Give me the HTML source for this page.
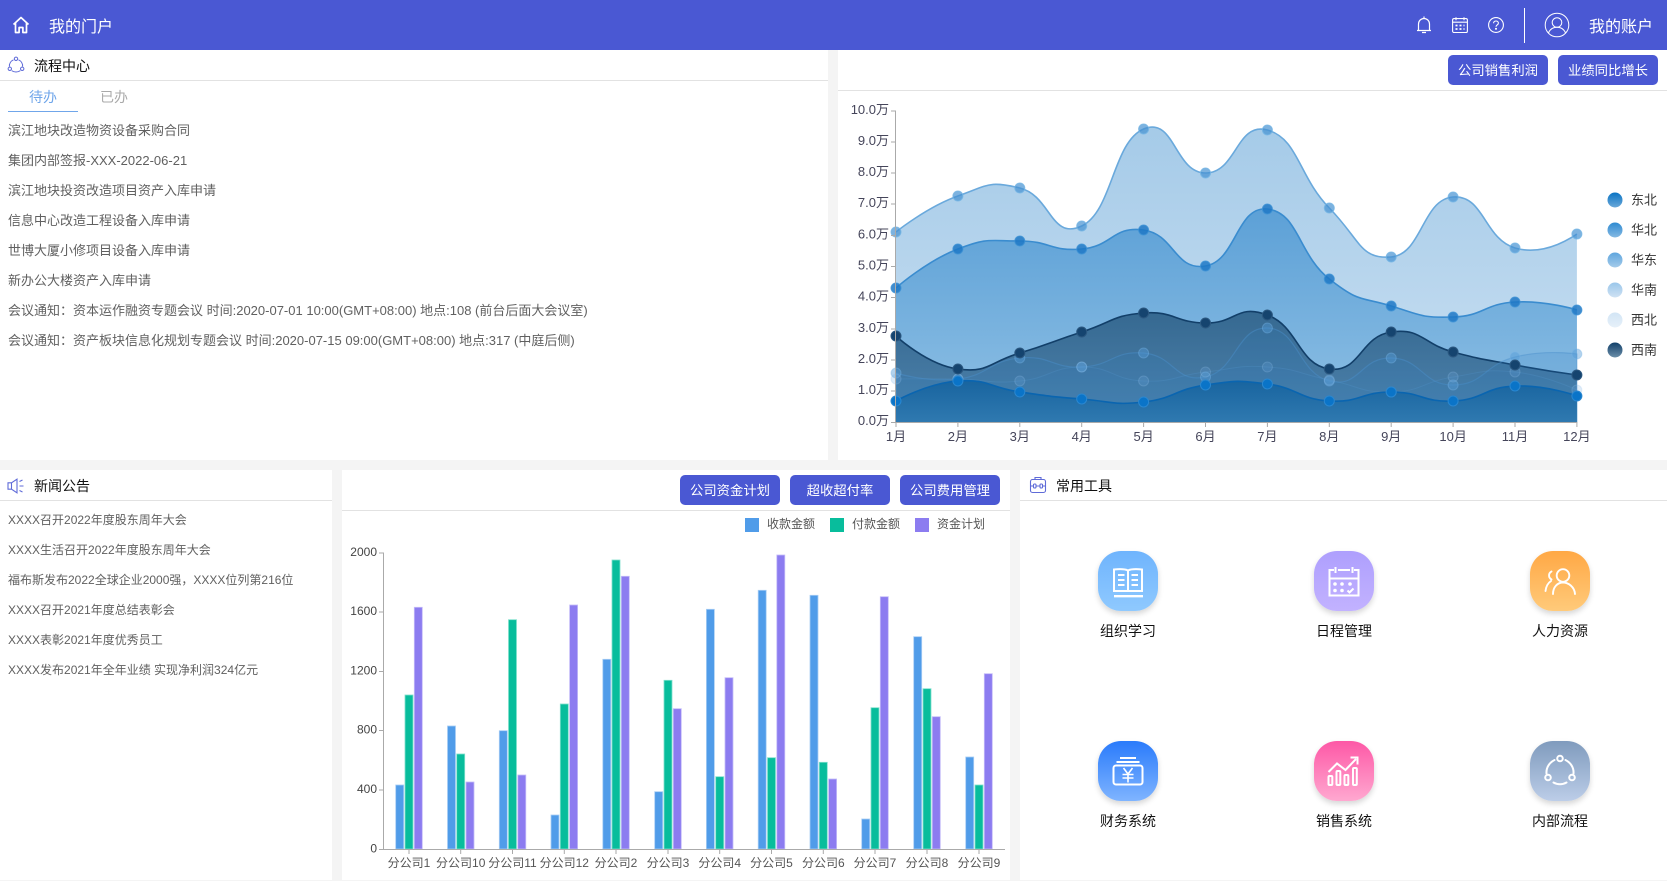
<!DOCTYPE html>
<html lang="zh">
<head>
<meta charset="utf-8">
<title>我的门户</title>
<style>
html,body{margin:0;padding:0;width:1667px;height:881px;overflow:hidden;background:#f4f4f4;font-family:"Liberation Sans","Noto Sans CJK SC",sans-serif;}
.a{position:absolute;white-space:nowrap;}
.p{position:absolute;background:#fff;}
.ln{position:absolute;height:1px;background:#e2e2e2;}
.t{position:absolute;white-space:nowrap;font-size:14px;line-height:20px;color:#111;}
.li{position:absolute;white-space:nowrap;left:8px;line-height:20px;color:#606060;}
.l13{font-size:13px}.l12{font-size:12px}
.b{position:absolute;width:100px;height:30px;line-height:32px;text-align:center;background:#4a58d3;color:#fff;font-size:13.33px;border-radius:5px;}
.ic{position:absolute;width:60px;height:60px;border-radius:23px;box-shadow:0 3px 6px rgba(0,0,0,.16);}
.ic svg{position:absolute;left:0;top:0;}
.lb{position:absolute;width:120px;text-align:center;font-size:14px;line-height:20px;color:#111;}
svg text{font-family:"Liberation Sans","Noto Sans CJK SC",sans-serif;}
</style>
</head>
<body>
<!-- top bar -->
<div class="p" style="left:0;top:0;width:1667px;height:50px;background:#4a58d3"></div>
<svg class="a" style="left:12px;top:16px" width="18" height="19" viewBox="0 0 18 19" fill="none" stroke="#fff" stroke-width="1.7" stroke-linejoin="round"><path d="M1.5 8.5 9 1.5l7.5 7M3.5 7v9.5h3.6v-5h3.800v5h3.600V7"/></svg>
<div class="a" style="left:49px;top:17px;font-size:16px;line-height:22px;color:#fff">我的门户</div>
<svg class="a" style="left:1415px;top:15px" width="18" height="20" viewBox="0 0 18 20" fill="none" stroke="#fff" stroke-width="1.2"><path d="M2 15.5h14M3.5 15.5V9a5.5 5.5 0 0 1 11 0v6.5M9 1.5v2M7 17.5h4" /></svg>
<svg class="a" style="left:1452px;top:17px" width="16" height="16" viewBox="0 0 16 16" fill="none" stroke="#fff" stroke-width="1.1"><rect x=".6" y="1.6" width="14.8" height="14" rx="1.5"/><path d="M.6 5.2h14.8M4 .3v3M12 .3v3"/><path stroke-width="1.8" stroke-dasharray="2 2" d="M3.5 8.5h9M3.5 12h9"/></svg>
<svg class="a" style="left:1488px;top:17px" width="16" height="16" viewBox="0 0 16 16" fill="none" stroke="#fff" stroke-width="1.1"><circle cx="8" cy="8" r="7.4"/><path d="M5.6 6.2C5.6 4.800 6.700 4 8 4c1.400 0 2.400.9 2.400 2.100 0 1.800-2.400 1.900-2.400 3.700"/><circle cx="8" cy="11.800" r=".5" fill="#fff"/></svg>
<div class="a" style="left:1524px;top:8px;width:1px;height:35px;background:#fff"></div>
<svg class="a" style="left:1544px;top:12px" width="26" height="26" viewBox="0 0 26 26" fill="none" stroke="#fff" stroke-width="1"><circle cx="13" cy="13" r="11.800"/><circle cx="13" cy="10.500" r="4.800"/><path d="M4.500 21c1.500-3.800 4.500-5.700 8.500-5.700s7 1.900 8.500 5.700"/></svg>
<div class="a" style="left:1589px;top:17px;font-size:16px;line-height:22px;color:#fff">我的账户</div>

<!-- flow panel -->
<div class="p" style="left:0;top:50px;width:828px;height:410px"></div>
<svg class="a" style="left:7px;top:56px" width="18" height="18" viewBox="0 0 18 18" fill="none" stroke="#5f6bd8" stroke-width="1"><circle cx="9" cy="2.800" r="1.700"/><circle cx="2.800" cy="12.800" r="1.700"/><circle cx="15.200" cy="12.800" r="1.700"/><path d="M6.500 3.800C3.800 5 2.200 7.500 2.400 10.600M11.500 3.800c2.700 1.200 4.300 3.700 4.100 6.800M4.700 14.600c2.500 1.900 6.100 1.900 8.600 0"/></svg>
<div class="t" style="left:34px;top:56px">流程中心</div>
<div class="ln" style="left:0;top:80px;width:828px"></div>
<div class="a" style="left:29px;top:87px;font-size:14px;line-height:20px;color:#70a6ea">待办</div>
<div class="a" style="left:100px;top:87px;font-size:14px;line-height:20px;color:#aaa">已办</div>
<div class="a" style="left:8px;top:111px;width:70px;height:1px;background:#70a6ea"></div>
<div class="li l13" style="top:121px">滨江地块改造物资设备采购合同</div>
<div class="li l13" style="top:151px">集团内部签报-XXX-2022-06-21</div>
<div class="li l13" style="top:181px">滨江地块投资改造项目资产入库申请</div>
<div class="li l13" style="top:211px">信息中心改造工程设备入库申请</div>
<div class="li l13" style="top:241px">世博大厦小修项目设备入库申请</div>
<div class="li l13" style="top:271px">新办公大楼资产入库申请</div>
<div class="li l13" style="top:301px">会议通知：资本运作融资专题会议 时间:2020-07-01 10:00(GMT+08:00) 地点:108 (前台后面大会议室)</div>
<div class="li l13" style="top:331px">会议通知：资产板块信息化规划专题会议 时间:2020-07-15 09:00(GMT+08:00) 地点:317 (中庭后侧)</div>

<!-- area chart panel -->
<div class="p" style="left:838px;top:50px;width:829px;height:410px"></div>
<div class="ln" style="left:838px;top:90px;width:829px"></div>
<div class="b" style="left:1448px;top:55px">公司销售利润</div>
<div class="b" style="left:1558px;top:55px">业绩同比增长</div>
<svg class="a" style="left:0;top:0" width="1667" height="460" viewBox="0 0 1667 460">
<defs>
<linearGradient id="g1" gradientUnits="userSpaceOnUse" x1="0" y1="120" x2="0" y2="340"><stop offset="0" stop-color="#a4cae8"/><stop offset="1" stop-color="#c0daef"/></linearGradient>
<linearGradient id="g2" gradientUnits="userSpaceOnUse" x1="0" y1="200" x2="0" y2="400"><stop offset="0" stop-color="#5a9fd6"/><stop offset="1" stop-color="#8abde3"/></linearGradient>
<linearGradient id="g3" gradientUnits="userSpaceOnUse" x1="0" y1="310" x2="0" y2="422"><stop offset="0" stop-color="#356890"/><stop offset="1" stop-color="#4f84ae"/></linearGradient>
<linearGradient id="g4" gradientUnits="userSpaceOnUse" x1="0" y1="380" x2="0" y2="422"><stop offset="0" stop-color="#18649f"/><stop offset="1" stop-color="#2f79b0"/></linearGradient>
<linearGradient id="s1" x1="0" y1="0" x2="0" y2="1"><stop offset="0" stop-color="#0a74c4"/><stop offset="1" stop-color="#6aa8d8"/></linearGradient>
<linearGradient id="s2" x1="0" y1="0" x2="0" y2="1"><stop offset="0" stop-color="#2f8bd2"/><stop offset="1" stop-color="#85b9e2"/></linearGradient>
<linearGradient id="s3" x1="0" y1="0" x2="0" y2="1"><stop offset="0" stop-color="#5fa6de"/><stop offset="1" stop-color="#a4cbea"/></linearGradient>
<linearGradient id="s4" x1="0" y1="0" x2="0" y2="1"><stop offset="0" stop-color="#9ac6ea"/><stop offset="1" stop-color="#cfe2f3"/></linearGradient>
<linearGradient id="s5" x1="0" y1="0" x2="0" y2="1"><stop offset="0" stop-color="#d2e5f5"/><stop offset="1" stop-color="#e6f0f9"/></linearGradient>
<linearGradient id="s6" x1="0" y1="0" x2="0" y2="1"><stop offset="0" stop-color="#12406a"/><stop offset="1" stop-color="#6b8ea8"/></linearGradient>
</defs>
<!-- top series -->
<path fill="url(#g1)" d="M896,232 C896,232 926.9,207 957.9,196 S988.8,180.5 1019.8,188 S1050.7,240.75 1081.7,226 S1112.6,142.25 1143.6,129 S1174.5,172.75 1205.5,173 S1236.4,121.25 1267.4,130 S1298.3,176.25 1329.3,208 S1360.2,259.75 1391.2,257 S1422.1,199.25 1453.1,197 S1484,238.75 1515,248 S1576.9,234 1576.9,234 L1576.9,422 L896,422 Z"/>
<path fill="none" stroke="#6aa9dc" stroke-width="1.6" d="M896,232 C896,232 926.9,207 957.9,196 S988.8,180.5 1019.8,188 S1050.7,240.75 1081.7,226 S1112.6,142.25 1143.6,129 S1174.5,172.75 1205.5,173 S1236.4,121.25 1267.4,130 S1298.3,176.25 1329.3,208 S1360.2,259.75 1391.2,257 S1422.1,199.25 1453.1,197 S1484,238.75 1515,248 S1576.9,234 1576.9,234"/>
<!-- second series -->
<path fill="url(#g2)" d="M896,288 C896,288 926.9,260.75 957.9,249 S988.8,241 1019.8,241 S1050.7,251.75 1081.7,249 S1112.6,225.75 1143.6,230 S1174.5,271.25 1205.5,266 S1236.4,205.75 1267.4,209 S1298.3,254.75 1329.3,279 S1360.2,296.5 1391.2,306 S1422.1,318 1453.1,317 S1484,303.75 1515,302 S1576.9,310 1576.9,310 L1576.9,422 L896,422 Z"/>
<path fill="none" stroke="#3a8ccf" stroke-width="1.6" d="M896,288 C896,288 926.9,260.75 957.9,249 S988.8,241 1019.8,241 S1050.7,251.75 1081.7,249 S1112.6,225.75 1143.6,230 S1174.5,271.25 1205.5,266 S1236.4,205.75 1267.4,209 S1298.3,254.75 1329.3,279 S1360.2,296.5 1391.2,306 S1422.1,318 1453.1,317 S1484,303.75 1515,302 S1576.9,310 1576.9,310"/>
<!-- dark series -->
<path fill="url(#g3)" d="M896,336 C896,336 926.9,364.75 957.9,369 S988.8,362.25 1019.8,353 S1050.7,342 1081.7,332 S1112.6,315.25 1143.6,313 S1174.5,322.5 1205.5,323 S1236.4,303.5 1267.4,315 S1298.3,364.75 1329.3,369 S1360.2,336.25 1391.2,332 S1422.1,343.75 1453.1,352 S1484,359.25 1515,365 S1576.9,375 1576.9,375 L1576.9,422 L896,422 Z"/>
<path fill="none" stroke="#123f69" stroke-width="1.6" d="M896,336 C896,336 926.9,364.75 957.9,369 S988.8,362.25 1019.8,353 S1050.7,342 1081.7,332 S1112.6,315.25 1143.6,313 S1174.5,322.5 1205.5,323 S1236.4,303.5 1267.4,315 S1298.3,364.75 1329.3,369 S1360.2,336.25 1391.2,332 S1422.1,343.75 1453.1,352 S1484,359.25 1515,365 S1576.9,375 1576.9,375"/>
<!-- translucent series -->
<path fill="rgba(45,125,190,.16)" stroke="rgba(75,145,205,.45)" stroke-width="1.2" d="M896,373 C896,373 926.9,382.75 957.9,379 S988.8,361 1019.8,358 S1050.7,368.25 1081.7,367 S1112.6,350.5 1143.6,353 S1174.5,383.25 1205.5,377 S1236.4,327 1267.4,328 S1298.3,373.5 1329.3,381 S1360.2,357 1391.2,358 S1422.1,385.25 1453.1,385 S1484,364.75 1515,357 S1576.9,354 1576.9,354 L1576.9,422 L896,422 Z"/>
<path fill="rgba(50,125,190,.1)" stroke="rgba(85,150,205,.28)" stroke-width="1" d="M896,379 C896,379 926.9,378.5 957.9,379 S988.8,384 1019.8,381 S1050.7,367 1081.7,367 S1112.6,379.75 1143.6,381 S1174.5,375.5 1205.5,372 S1236.4,365 1267.4,367 S1298.3,373.75 1329.3,380 S1360.2,392.75 1391.2,392 S1422.1,382 1453.1,377 S1484,368.75 1515,372 S1576.9,390 1576.9,390 L1576.9,422 L896,422 Z"/>
<!-- bottom series -->
<path fill="url(#g4)" d="M896,401 C896,401 926.9,383.25 957.9,381 S988.8,387.5 1019.8,392 S1050.7,396.5 1081.7,399 S1112.6,405.5 1143.6,402 S1174.5,389.5 1205.5,385 S1236.4,380 1267.4,384 S1298.3,399 1329.3,401 S1360.2,392 1391.2,392 S1422.1,402.5 1453.1,401 S1484,387.25 1515,386 S1576.9,396 1576.9,396 L1576.9,422 L896,422 Z"/>
<path fill="none" stroke="#0a65b0" stroke-width="1.6" d="M896,401 C896,401 926.9,383.25 957.9,381 S988.8,387.5 1019.8,392 S1050.7,396.5 1081.7,399 S1112.6,405.5 1143.6,402 S1174.5,389.5 1205.5,385 S1236.4,380 1267.4,384 S1298.3,399 1329.3,401 S1360.2,392 1391.2,392 S1422.1,402.5 1453.1,401 S1484,387.25 1515,386 S1576.9,396 1576.9,396"/>
<!-- dots -->
<g fill="rgba(70,145,210,.7)" stroke="rgba(115,180,228,.8)" stroke-width="1">
<circle cx="896" cy="232" r="5"/><circle cx="957.9" cy="196" r="5"/><circle cx="1019.8" cy="188" r="5"/><circle cx="1081.7" cy="226" r="5"/><circle cx="1143.6" cy="129" r="5"/><circle cx="1205.500" cy="173" r="5"/><circle cx="1267.400" cy="130" r="5"/><circle cx="1329.300" cy="208" r="5"/><circle cx="1391.200" cy="257" r="5"/><circle cx="1453.100" cy="197" r="5"/><circle cx="1515" cy="248" r="5"/><circle cx="1576.900" cy="234" r="5"/></g>
<g fill="rgba(30,120,198,.85)" stroke="rgba(60,145,212,.8)" stroke-width="1">
<circle cx="896" cy="288" r="5"/><circle cx="957.9" cy="249" r="5"/><circle cx="1019.8" cy="241" r="5"/><circle cx="1081.7" cy="249" r="5"/><circle cx="1143.6" cy="230" r="5"/><circle cx="1205.500" cy="266" r="5"/><circle cx="1267.400" cy="209" r="5"/><circle cx="1329.300" cy="279" r="5"/><circle cx="1391.200" cy="306" r="5"/><circle cx="1453.100" cy="317" r="5"/><circle cx="1515" cy="302" r="5"/><circle cx="1576.900" cy="310" r="5"/></g>
<g fill="rgba(85,155,215,.45)" stroke="rgba(120,180,230,.4)" stroke-width="1">
<circle cx="896" cy="373" r="5"/><circle cx="957.9" cy="379" r="5"/><circle cx="1019.8" cy="358" r="5"/><circle cx="1081.7" cy="367" r="5"/><circle cx="1143.6" cy="353" r="5"/><circle cx="1205.500" cy="377" r="5"/><circle cx="1267.400" cy="328" r="5"/><circle cx="1329.300" cy="381" r="5"/><circle cx="1391.200" cy="358" r="5"/><circle cx="1453.100" cy="385" r="5"/><circle cx="1515" cy="357" r="5"/><circle cx="1576.900" cy="354" r="5"/></g>
<g fill="rgba(110,170,222,.22)" stroke="rgba(150,195,235,.25)" stroke-width="1">
<circle cx="896" cy="379" r="5"/><circle cx="957.9" cy="379" r="5"/><circle cx="1019.8" cy="381" r="5"/><circle cx="1081.7" cy="367" r="5"/><circle cx="1143.6" cy="381" r="5"/><circle cx="1205.500" cy="372" r="5"/><circle cx="1267.400" cy="367" r="5"/><circle cx="1329.300" cy="380" r="5"/><circle cx="1391.200" cy="392" r="5"/><circle cx="1453.100" cy="377" r="5"/><circle cx="1515" cy="372" r="5"/><circle cx="1576.900" cy="390" r="5"/></g>
<g fill="#15446f" stroke="#2c5880" stroke-width="1">
<circle cx="896" cy="336" r="5"/><circle cx="957.9" cy="369" r="5"/><circle cx="1019.8" cy="353" r="5"/><circle cx="1081.7" cy="332" r="5"/><circle cx="1143.6" cy="313" r="5"/><circle cx="1205.500" cy="323" r="5"/><circle cx="1267.400" cy="315" r="5"/><circle cx="1329.300" cy="369" r="5"/><circle cx="1391.200" cy="332" r="5"/><circle cx="1453.100" cy="352" r="5"/><circle cx="1515" cy="365" r="5"/><circle cx="1576.900" cy="375" r="5"/></g>
<g fill="#0a74c8" stroke="#2a87d0" stroke-width="1">
<circle cx="896" cy="401" r="5"/><circle cx="957.9" cy="381" r="5"/><circle cx="1019.8" cy="392" r="5"/><circle cx="1081.7" cy="399" r="5"/><circle cx="1143.6" cy="402" r="5"/><circle cx="1205.500" cy="385" r="5"/><circle cx="1267.400" cy="384" r="5"/><circle cx="1329.300" cy="401" r="5"/><circle cx="1391.200" cy="392" r="5"/><circle cx="1453.100" cy="401" r="5"/><circle cx="1515" cy="386" r="5"/><circle cx="1576.900" cy="396" r="5"/></g>
<!-- axes -->
<path fill="none" stroke="#aaa" stroke-width="1" d="M895.500 111V422.500H1577M891 111h5M891 142h5M891 173h5M891 204h5M891 235.500h5M891 266.500h5M891 297.500h5M891 329h5M891 360h5M891 391h5M891 422.500h5M896 422v5M957.900 422v5M1019.800 422v5M1081.700 422v5M1143.600 422v5M1205.500 422v5M1267.400 422v5M1329.300 422v5M1391.200 422v5M1453.100 422v5M1515 422v5M1576.900 422v5"/>
<g font-size="13" fill="#45455a" text-anchor="end">
<text x="889" y="114">10.0万</text><text x="889" y="145">9.0万</text><text x="889" y="176">8.0万</text><text x="889" y="207">7.0万</text><text x="889" y="238.500">6.0万</text><text x="889" y="269.500">5.0万</text><text x="889" y="300.500">4.0万</text><text x="889" y="332">3.0万</text><text x="889" y="363">2.0万</text><text x="889" y="394">1.0万</text><text x="889" y="425">0.0万</text>
</g>
<g font-size="13" fill="#45455a" text-anchor="middle">
<text x="896" y="441">1月</text><text x="957.900" y="441">2月</text><text x="1019.800" y="441">3月</text><text x="1081.700" y="441">4月</text><text x="1143.600" y="441">5月</text><text x="1205.500" y="441">6月</text><text x="1267.400" y="441">7月</text><text x="1329.300" y="441">8月</text><text x="1391.200" y="441">9月</text><text x="1453.100" y="441">10月</text><text x="1515" y="441">11月</text><text x="1576.900" y="441">12月</text>
</g>
<!-- legend -->
<circle cx="1615" cy="200" r="7.500" fill="url(#s1)"/><circle cx="1615" cy="230" r="7.500" fill="url(#s2)"/><circle cx="1615" cy="260" r="7.500" fill="url(#s3)"/><circle cx="1615" cy="290" r="7.500" fill="url(#s4)"/><circle cx="1615" cy="320" r="7.500" fill="url(#s5)"/><circle cx="1615" cy="350" r="7.500" fill="url(#s6)"/>
<g font-size="13" fill="#333">
<text x="1631" y="204.500">东北</text><text x="1631" y="234.500">华北</text><text x="1631" y="264.500">华东</text><text x="1631" y="294.500">华南</text><text x="1631" y="324.500">西北</text><text x="1631" y="354.500">西南</text>
</g>
</svg>

<!-- news panel -->
<div class="p" style="left:0;top:470px;width:332px;height:410px"></div>
<svg class="a" style="left:7px;top:477px" width="18" height="18" viewBox="0 0 18 18" fill="none" stroke="#5f6bd8" stroke-width="1.1"><path d="M1 5.800h3.500L10 2.200v13.600L4.500 12.200H1zM4.500 5.800v6.400"/><path d="M12.500 4.500l3-1.500M12.500 9h4M12.500 13.500l3 1.500"/></svg>
<div class="t" style="left:34px;top:476px">新闻公告</div>
<div class="ln" style="left:0;top:500px;width:332px"></div>
<div class="li l12" style="top:510px">XXXX召开2022年度股东周年大会</div>
<div class="li l12" style="top:540px">XXXX生活召开2022年度股东周年大会</div>
<div class="li l12" style="top:570px">福布斯发布2022全球企业2000强，XXXX位列第216位</div>
<div class="li l12" style="top:600px">XXXX召开2021年度总结表彰会</div>
<div class="li l12" style="top:630px">XXXX表彰2021年度优秀员工</div>
<div class="li l12" style="top:660px">XXXX发布2021年全年业绩 实现净利润324亿元</div>

<!-- bar chart panel -->
<div class="p" style="left:342px;top:470px;width:668px;height:410px"></div>
<div class="ln" style="left:342px;top:510px;width:668px"></div>
<div class="b" style="left:680px;top:475px">公司资金计划</div>
<div class="b" style="left:790px;top:475px">超收超付率</div>
<div class="b" style="left:900px;top:475px">公司费用管理</div>
<svg class="a" style="left:0;top:470px" width="1020" height="411" viewBox="0 470 1020 411">
<rect x="745" y="518" width="14" height="14" fill="#509ce9"/><rect x="830" y="518" width="14" height="14" fill="#08bd9c"/><rect x="915" y="518" width="14" height="14" fill="#8c7cf0"/>
<g font-size="12" fill="#555"><text x="767" y="528">收款金额</text><text x="852" y="528">付款金额</text><text x="937" y="528">资金计划</text></g>
<g fill="#509ce9" stroke="#a8cef4" stroke-width=".8">
<rect x="395.700" y="785" width="8" height="64"/><rect x="447.500" y="726" width="8" height="123"/><rect x="499.300" y="730.700" width="8" height="118.300"/><rect x="551" y="815" width="8" height="34"/><rect x="602.800" y="659.300" width="8" height="189.700"/><rect x="654.700" y="791.700" width="8" height="57.300"/><rect x="706.400" y="609.300" width="8" height="239.700"/><rect x="758.200" y="590.300" width="8" height="258.700"/><rect x="810" y="595.300" width="8" height="253.700"/><rect x="861.700" y="819" width="8" height="30"/><rect x="913.700" y="636.700" width="8" height="212.300"/><rect x="965.700" y="757" width="8" height="92"/>
</g>
<g fill="#08bd9c" stroke="#80e0cd" stroke-width=".8">
<rect x="405" y="695" width="8" height="154"/><rect x="456.700" y="754" width="8" height="95"/><rect x="508.500" y="619.700" width="8" height="229.300"/><rect x="560.300" y="704" width="8" height="145"/><rect x="612" y="560" width="8" height="289"/><rect x="664" y="680.300" width="8" height="168.700"/><rect x="715.700" y="776.700" width="8" height="72.300"/><rect x="767.500" y="757.700" width="8" height="91.300"/><rect x="819.300" y="762.300" width="8" height="86.700"/><rect x="871" y="707.700" width="8" height="141.300"/><rect x="923" y="688.700" width="8" height="160.300"/><rect x="975" y="785" width="8" height="64"/>
</g>
<g fill="#8c7cf0" stroke="#c4bcf8" stroke-width=".8">
<rect x="414.300" y="607.300" width="8" height="241.700"/><rect x="466" y="782" width="8" height="67"/><rect x="517.800" y="775" width="8" height="74"/><rect x="569.600" y="605" width="8" height="244"/><rect x="621.300" y="576.300" width="8" height="272.700"/><rect x="673.300" y="708.700" width="8" height="140.300"/><rect x="725" y="677.700" width="8" height="171.300"/><rect x="776.800" y="555" width="8" height="294"/><rect x="828.600" y="779" width="8" height="70"/><rect x="880.300" y="596.700" width="8" height="252.300"/><rect x="932.300" y="716.700" width="8" height="132.300"/><rect x="984.300" y="673.700" width="8" height="175.300"/>
</g>
<path fill="none" stroke="#aaa" stroke-width="1" d="M383.500 553V849.500H1005M379 553h5M379 612h5M379 671.500h5M379 730.500h5M379 790h5M379 849.500h5M409 849v5M460.700 849v5M512.500 849v5M564.300 849v5M616 849v5M668 849v5M719.700 849v5M771.500 849v5M823.300 849v5M875 849v5M927 849v5M979 849v5"/>
<g font-size="12" fill="#444" text-anchor="end">
<text x="377" y="556">2000</text><text x="377" y="615">1600</text><text x="377" y="674.500">1200</text><text x="377" y="733.500">800</text><text x="377" y="793">400</text><text x="377" y="852.500">0</text>
</g>
<g font-size="12" fill="#555" text-anchor="middle">
<text x="409" y="867">分公司1</text><text x="460.700" y="867">分公司10</text><text x="512.500" y="867">分公司11</text><text x="564.300" y="867">分公司12</text><text x="616" y="867">分公司2</text><text x="668" y="867">分公司3</text><text x="719.700" y="867">分公司4</text><text x="771.500" y="867">分公司5</text><text x="823.300" y="867">分公司6</text><text x="875" y="867">分公司7</text><text x="927" y="867">分公司8</text><text x="979" y="867">分公司9</text>
</g>
</svg>

<!-- tools panel -->
<div class="p" style="left:1020px;top:470px;width:647px;height:410px"></div>
<svg class="a" style="left:1029px;top:476px" width="18" height="18" viewBox="0 0 18 18" fill="none" stroke="#5f6bd8" stroke-width="1.1"><rect x="1.500" y="3.500" width="15" height="13" rx="2"/><path d="M6 3.500V1.500h6v2"/><path d="M1.500 10h2.500M7.500 10h3M14 10h2.500"/><rect x="4.500" y="8" width="2.500" height="4" rx="1"/><rect x="11" y="8" width="2.500" height="4" rx="1"/></svg>
<div class="t" style="left:1056px;top:476px">常用工具</div>
<div class="ln" style="left:1020px;top:500px;width:647px"></div>

<div class="ic" style="left:1098px;top:551px;background:linear-gradient(#6fb4fd,#8fc9fe)"><svg width="60" height="60" viewBox="0 0 60 60" fill="none" stroke="#fff" stroke-width="2"><path d="M30 19.500c-3-1.500-9-1.500-14-1v21.500h14zM30 19.500c3-1.500 9-1.500 14-1v21.500H30z"/><path stroke-width="2.400" d="M16 45.200h29"/><path d="M20 24h6.500M20 29h6.500M20 34h6.500M33.500 24H40M33.500 29H40M33.500 34H40"/></svg></div>
<div class="lb" style="left:1068px;top:621px">组织学习</div>

<div class="ic" style="left:1314px;top:551px;background:linear-gradient(#ae9ffd,#c2b2ff)"><svg width="60" height="60" viewBox="0 0 60 60" fill="none" stroke="#fff" stroke-width="2"><path d="M20 19h-4.500v25.500h29V19H40M24 19h12M21.500 16v6M38.500 16v6M15.500 27.500h29"/><g fill="#fff" stroke="none"><circle cx="21" cy="33" r="1.800"/><circle cx="28" cy="33" r="1.800"/><circle cx="36" cy="33" r="1.800"/><circle cx="21" cy="39.500" r="1.800"/><circle cx="28" cy="39.500" r="1.800"/></g><path d="M33.500 39.500l2 2 4-4"/></svg></div>
<div class="lb" style="left:1284px;top:621px">日程管理</div>

<div class="ic" style="left:1530px;top:551px;background:linear-gradient(#ffa845,#ffca7a)"><svg width="60" height="60" viewBox="0 0 60 60" fill="none" stroke="#fff" stroke-width="1.900" stroke-linecap="round"><circle cx="33" cy="24.500" r="6.300"/><path d="M23 43c0-7 4.500-11.500 10-11.500S44.500 36 45 43M21.500 20.500c-3 1.500-3.500 6 0 8M21 30c-3 2-5 5.500-5.500 10"/></svg></div>
<div class="lb" style="left:1500px;top:621px">人力资源</div>

<div class="ic" style="left:1098px;top:741px;background:linear-gradient(#2a7bfb,#7fb4ff)"><svg width="60" height="60" viewBox="0 0 60 60" fill="none" stroke="#fff" stroke-width="2"><path d="M22 17h16M18.500 21h23"/><rect x="15.500" y="24.500" width="29" height="19" rx="2.500"/><path stroke-width="1.600" d="M25.500 27l4.500 6 4.500-6M24.500 33.500h11M24.500 37h11M30 33v8.500"/></svg></div>
<div class="lb" style="left:1068px;top:811px">财务系统</div>

<div class="ic" style="left:1314px;top:741px;background:linear-gradient(#fd58a6,#ffa8d0)"><svg width="60" height="60" viewBox="0 0 60 60" fill="none" stroke="#fff" stroke-width="2"><rect x="14.500" y="35" width="3.800" height="9" rx="1"/><rect x="22.500" y="30" width="3.800" height="14" rx="1"/><rect x="30.500" y="34" width="3.800" height="10" rx="1"/><rect x="39" y="27" width="3.800" height="17" rx="1"/><path d="M14.500 31l8.500-8.500 8.500 6.500 10.500-11"/><path d="M36.500 16.500h7v7" /></svg></div>
<div class="lb" style="left:1284px;top:811px">销售系统</div>

<div class="ic" style="left:1530px;top:741px;background:linear-gradient(#7f9bbd,#bccde8)"><svg width="60" height="60" viewBox="0 0 60 60" fill="none" stroke="#fff" stroke-width="2" stroke-linecap="round"><circle cx="30" cy="17.500" r="2.800"/><circle cx="18" cy="36.500" r="2.800"/><circle cx="42" cy="36.500" r="2.800"/><path d="M24.500 19c-5 2.500-8.500 7.500-8 13.500M35.500 19c5 2.500 8.500 7.500 8 13.500M23.500 41.500c4 2.300 9 2.300 13 0"/></svg></div>
<div class="lb" style="left:1500px;top:811px">内部流程</div>
</body>
</html>
